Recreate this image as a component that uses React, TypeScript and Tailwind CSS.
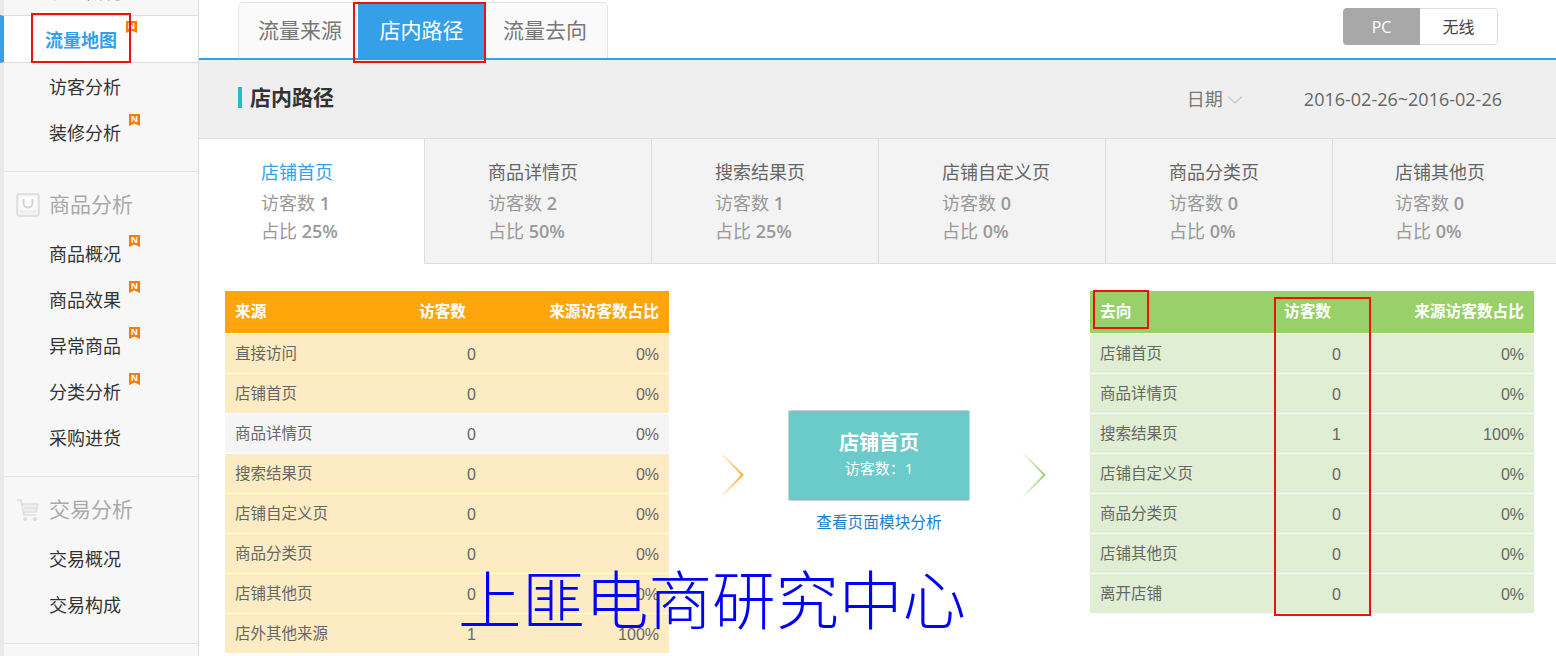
import React from "react";

const FONT = '"Open Sans","Noto Sans CJK SC",sans-serif';

function NBadge({ className }: { className: string }) {
  return (
    <span className={`absolute w-[11px] h-[12px] bg-[#ff7a00] text-white text-[9px] leading-[10px] font-bold text-center [clip-path:polygon(0_0,100%_0,100%_100%,50%_80%,0_100%)] ${className}`}>
      N
    </span>
  );
}

function NavItem({ label, badge }: { label: string; badge?: boolean }) {
  return (
    <div className="relative h-[46px] pl-[45px] pt-[2px] flex items-center text-[18px] text-[#333]">
      {label}
      {badge && <NBadge className="left-[125px] top-[5px]" />}
    </div>
  );
}

function BagIcon() {
  return (
    <svg width="24" height="24" viewBox="0 0 24 24" className="shrink-0">
      <rect x="1" y="1" width="22" height="22" rx="2" fill="#f0f0f0" stroke="#dcdcdc" strokeWidth="1.5" />
      <rect x="3" y="3" width="18" height="14" fill="#fafafa" />
      <path d="M7.5 6v4a4.5 4.5 0 0 0 9 0V6" fill="none" stroke="#d4d4d4" strokeWidth="2" />
    </svg>
  );
}

function CartIcon() {
  return (
    <svg width="24" height="24" viewBox="0 0 24 24" className="shrink-0">
      <path d="M1 2h4l3 15h12" fill="none" stroke="#dedede" strokeWidth="1.6" />
      <path d="M6 6h16l-2 8H8" fill="#efefef" stroke="#dedede" strokeWidth="1.4" />
      <path d="M8 10h12" stroke="#dedede" strokeWidth="1.4" />
      <circle cx="9" cy="21" r="2" fill="#dcdcdc" />
      <circle cx="19" cy="21" r="2" fill="#dcdcdc" />
    </svg>
  );
}

function SectionHead({ label, icon }: { label: string; icon: React.ReactNode }) {
  return (
    <div className="h-[34px] pl-[12px] flex items-center gap-[9px] text-[21px] text-[#aaa]">
      {icon}
      {label}
    </div>
  );
}

function Sidebar() {
  return (
    <aside className="w-[199px] h-[656px] shrink-0 bg-[#f7f7f7] border-r border-[#ddd] overflow-hidden pl-[4px] shadow-[inset_4px_0_0_#e9e9e9]">
      <div className="-mt-[31px] h-[46px] pl-[45px] flex items-center text-[18px] text-[#333]">流量概况</div>
      <div className="relative -ml-[4px] h-[48px] pl-[41px] pt-[2px] flex items-center bg-white border-y border-[#ddd] border-l-[4px] border-l-[#35a0e8] text-[18px] font-bold text-[#35a0e8]">
        流量地图
        <NBadge className="left-[122px] top-[5px]" />
      </div>
      <NavItem label="访客分析" />
      <NavItem label="装修分析" badge />
      <div className="mt-[16px] border-t border-[#e3e3e3] pt-[16px]">
        <SectionHead label="商品分析" icon={<BagIcon />} />
        <div className="mt-[8px]">
          <NavItem label="商品概况" badge />
          <NavItem label="商品效果" badge />
          <NavItem label="异常商品" badge />
          <NavItem label="分类分析" badge />
          <NavItem label="采购进货" />
        </div>
      </div>
      <div className="mt-[16px] border-t border-[#e3e3e3] pt-[16px]">
        <SectionHead label="交易分析" icon={<CartIcon />} />
        <div className="mt-[8px]">
          <NavItem label="交易概况" />
          <NavItem label="交易构成" />
        </div>
      </div>
      <div className="mt-[16px] border-t border-[#e3e3e3]" />
    </aside>
  );
}

function Tabs() {
  return (
    <div className="h-[60px] shrink-0 flex items-start justify-between border-b-2 border-[#35a0e8] pl-[39px] pr-[58px]">
      <div className="mt-[2px] h-[56px] flex bg-[#fafafa] border border-b-0 border-[#e5e5e5] rounded-t-[5px] text-[21px] text-[#777]">
        <div className="w-[119px] flex items-center pl-[19px]">流量来源</div>
        <div className="w-[127px] flex items-center justify-center bg-[#35a0e8] text-white">店内路径</div>
        <div className="w-[122px] flex items-center pl-[18px]">流量去向</div>
      </div>
      <div className="mt-[8px] h-[37px] flex text-[16px] rounded-[4px] overflow-hidden">
        <div className="w-[77px] flex items-center justify-center bg-[#a8a8a8] text-white">PC</div>
        <div className="w-[78px] flex items-center justify-center bg-white text-[#444] border border-l-0 border-[#ddd] rounded-r-[4px]">无线</div>
      </div>
    </div>
  );
}

function TitleBar() {
  return (
    <div className="h-[79px] shrink-0 flex items-center bg-[#efefef] border-b border-[#ddd] pl-[39px] pr-[54px]">
      <div className="w-[4px] h-[21px] mb-[3px] bg-[#22bcc8]" />
      <div className="ml-[8px] mb-[3px] text-[21px] font-bold text-[#333]">店内路径</div>
      <div className="ml-auto flex items-center text-[18px] text-[#777]">
        日期
        <svg width="16" height="10" viewBox="0 0 16 10" className="ml-[4px] mt-[2px]">
          <path d="M1 1.5 8 8l7-6.5" fill="none" stroke="#ccc" strokeWidth="1.4" />
        </svg>
      </div>
      <div className="ml-[61px] text-[18px] text-[#666]">2016-02-26~2016-02-26</div>
    </div>
  );
}

const pages = [
  ["店铺首页", "1", "25%"],
  ["商品详情页", "2", "50%"],
  ["搜索结果页", "1", "25%"],
  ["店铺自定义页", "0", "0%"],
  ["商品分类页", "0", "0%"],
  ["店铺其他页", "0", "0%"],
];

function PageCards() {
  return (
    <div className="h-[125px] shrink-0 flex">
      {pages.map(([name, visitors, share], i) => (
        <div
          key={name}
          className={
            i === 0
              ? "w-[226px] pl-[62px] pt-[20px] bg-white border-r border-[#ddd]"
              : i === 5
              ? "flex-1 pl-[62px] pt-[20px] bg-[#f3f3f3] border-b border-[#ddd]"
              : "w-[227px] pl-[63px] pt-[20px] bg-[#f3f3f3] border-r border-b border-[#ddd]"
          }
        >
          <div className={`text-[18px] leading-[26px] ${i === 0 ? "text-[#35a0e8]" : "text-[#666]"}`}>{name}</div>
          <div className="mt-[5px] text-[18px] leading-[26px] text-[#999]">
            访客数 <span className="font-semibold">{visitors}</span>
          </div>
          <div className="mt-[2px] text-[18px] leading-[26px] text-[#999]">
            占比 <span className="font-semibold">{share}</span>
          </div>
        </div>
      ))}
    </div>
  );
}

type Row = { name: string; count: string; share: string; muted?: boolean };

function FlowTable({ title, head, body, rows }: { title: string; head: string; body: string; rows: Row[] }) {
  return (
    <div className="w-[444px] shrink-0 font-['Liberation_Sans','Noto_Sans_CJK_SC',sans-serif]">
      <div className={`h-[42px] flex items-center pl-[10px] pr-[10px] text-white text-[15.7px] font-bold ${head}`}>
        <div className="w-[184px]">{title}</div>
        <div className="w-[47px] whitespace-nowrap">访客数</div>
        <div className="flex-1 text-right">来源访客数占比</div>
      </div>
      {rows.map((r) => (
        <div
          key={r.name}
          className={`h-[40px] flex items-center pl-[10px] pr-[10px] text-[#666] border-t border-white ${r.muted ? "bg-[#f5f5f5]" : body}`}
        >
          <div className="w-[241px] flex-none flex justify-between items-center">
            <span className="text-[15.5px]">{r.name}</span>
            <span className="mt-[2px] text-[16px]">{r.count}</span>
          </div>
          <div className="flex-1 mt-[2px] text-right text-[16px]">{r.share}</div>
        </div>
      ))}
    </div>
  );
}

function Chevron({ id, color, className }: { id: string; color: string; className: string }) {
  return (
    <svg width="26" height="48" viewBox="0 0 26 48" className={`shrink-0 mt-[41px] ${className}`}>
      <defs>
        <linearGradient id={id} x1="0" y1="0" x2="0" y2="1">
          <stop offset="0" stopColor={color} stopOpacity="0" />
          <stop offset="0.5" stopColor={color} />
          <stop offset="1" stopColor={color} stopOpacity="0" />
        </linearGradient>
      </defs>
      <path d="M1 1 23.5 24 1 47" fill="none" stroke={`url(#${id})`} strokeWidth="1.8" />
    </svg>
  );
}

const inRows: Row[] = [
  { name: "直接访问", count: "0", share: "0%" },
  { name: "店铺首页", count: "0", share: "0%" },
  { name: "商品详情页", count: "0", share: "0%", muted: true },
  { name: "搜索结果页", count: "0", share: "0%" },
  { name: "店铺自定义页", count: "0", share: "0%" },
  { name: "商品分类页", count: "0", share: "0%" },
  { name: "店铺其他页", count: "0", share: "0%" },
  { name: "店外其他来源", count: "1", share: "100%" },
];

const outRows: Row[] = [
  { name: "店铺首页", count: "0", share: "0%" },
  { name: "商品详情页", count: "0", share: "0%" },
  { name: "搜索结果页", count: "1", share: "100%" },
  { name: "店铺自定义页", count: "0", share: "0%" },
  { name: "商品分类页", count: "0", share: "0%" },
  { name: "店铺其他页", count: "0", share: "0%" },
  { name: "离开店铺", count: "0", share: "0%" },
];

function FlowArea() {
  return (
    <div className="flex items-start pl-[26px] pt-[27px]">
      <FlowTable title="来源" head="bg-[#ffa50c]" body="bg-[#fcebc3]" rows={inRows} />
      <div className="flex items-start pt-[119px]">
        <Chevron id="arrowOrange" color="#ffa726" className="ml-[50px] mr-[43px]" />
        <div className="w-[182px] shrink-0">
          <div className="h-[91px] pb-[2px] flex flex-col items-center justify-center bg-[#6bcbca] border border-[#c4d4d4] rounded-[2px] text-white">
            <div className="text-[20px] font-bold leading-[27px]">店铺首页</div>
            <div className="text-[15px] leading-[24px]">访客数：1</div>
          </div>
          <div className="mt-[10px] text-center text-[15.7px] text-[#1a80d0]">查看页面模块分析</div>
        </div>
        <Chevron id="arrowGreen" color="#98d069" className="ml-[51px] mr-[43px]" />
      </div>
      <FlowTable title="去向" head="bg-[#98d069]" body="bg-[#e0eed4]" rows={outRows} />
    </div>
  );
}

function RedBox({ className }: { className: string }) {
  return <div className={`absolute border-2 border-[#f01010] ${className}`} />;
}

export default function App() {
  return (
    <div className="relative w-[1556px] h-[656px] overflow-hidden flex bg-white" style={{ fontFamily: FONT }}>
      <Sidebar />
      <main className="flex-1 min-w-0 flex flex-col">
        <Tabs />
        <TitleBar />
        <PageCards />
        <FlowArea />
      </main>
      <RedBox className="left-[31px] top-[13px] w-[100px] h-[50px]" />
      <RedBox className="left-[353px] top-[2px] w-[133px] h-[61px]" />
      <RedBox className="left-[1093px] top-[290px] w-[56px] h-[39px]" />
      <RedBox className="left-[1274px] top-[297px] w-[97px] h-[319px]" />
      <div className="absolute left-[458px] top-[555px] text-[63.5px] leading-[90px] font-light text-[#0000ff] whitespace-nowrap">
        上匪电商研究中心
      </div>
    </div>
  );
}
